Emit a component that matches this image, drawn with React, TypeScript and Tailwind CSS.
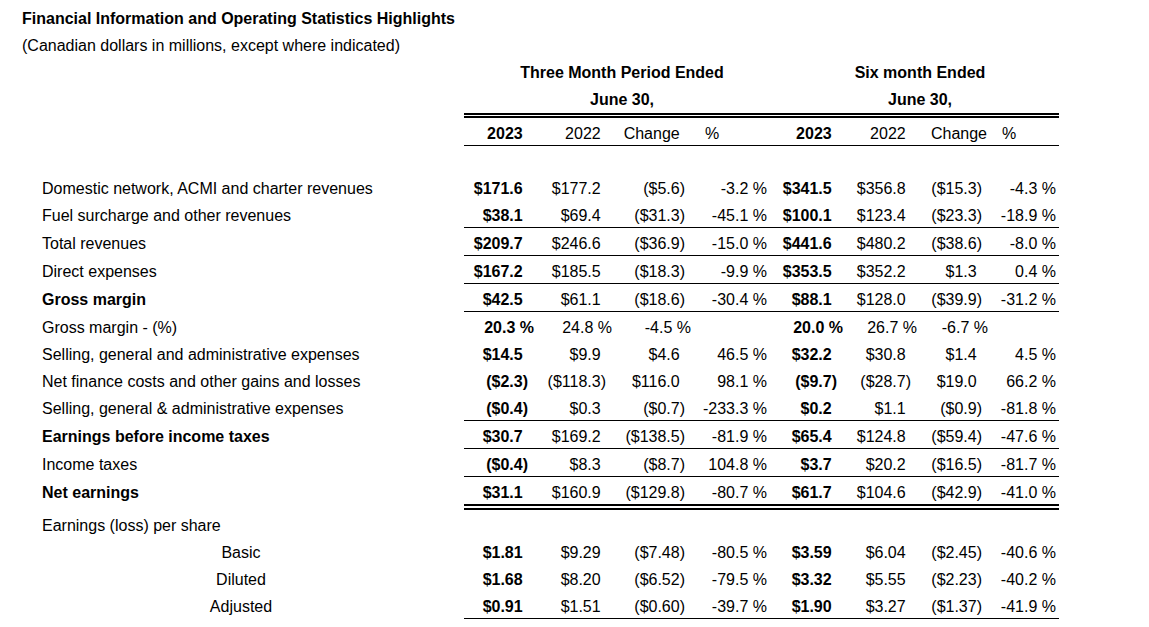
import React from "react";

const cols = [
  "w-[64px]",
  "w-[78px]",
  "w-[79px]",
  "w-[82px]",
  "w-[70px]",
  "w-[74px]",
  "w-[71px]",
  "w-[74px]",
];

type Row = {
  label: string;
  values?: string[];
  bold?: boolean;
  rule?: "single" | "double";
  center?: boolean;
  pct?: boolean;
};

const rows: Row[] = [
  {
    label: "Domestic network, ACMI and charter revenues",
    values: ["$171.6", "$177.2", "($5.6)", "-3.2 %", "$341.5", "$356.8", "($15.3)", "-4.3 %"],
  },
  {
    label: "Fuel surcharge and other revenues",
    values: ["$38.1", "$69.4", "($31.3)", "-45.1 %", "$100.1", "$123.4", "($23.3)", "-18.9 %"],
    rule: "single",
  },
  {
    label: "Total revenues",
    values: ["$209.7", "$246.6", "($36.9)", "-15.0 %", "$441.6", "$480.2", "($38.6)", "-8.0 %"],
    rule: "single",
  },
  {
    label: "Direct expenses",
    values: ["$167.2", "$185.5", "($18.3)", "-9.9 %", "$353.5", "$352.2", "$1.3", "0.4 %"],
    rule: "single",
  },
  {
    label: "Gross margin",
    bold: true,
    values: ["$42.5", "$61.1", "($18.6)", "-30.4 %", "$88.1", "$128.0", "($39.9)", "-31.2 %"],
    rule: "single",
  },
  {
    label: "Gross margin - (%)",
    pct: true,
    values: ["20.3 %", "24.8 %", "-4.5 %", "", "20.0 %", "26.7 %", "-6.7 %", ""],
  },
  {
    label: "Selling, general and administrative expenses",
    values: ["$14.5", "$9.9", "$4.6", "46.5 %", "$32.2", "$30.8", "$1.4", "4.5 %"],
  },
  {
    label: "Net finance costs and other gains and losses",
    values: ["($2.3)", "($118.3)", "$116.0", "98.1 %", "($9.7)", "($28.7)", "$19.0", "66.2 %"],
  },
  {
    label: "Selling, general & administrative expenses",
    values: ["($0.4)", "$0.3", "($0.7)", "-233.3 %", "$0.2", "$1.1", "($0.9)", "-81.8 %"],
    rule: "single",
  },
  {
    label: "Earnings before income taxes",
    bold: true,
    values: ["$30.7", "$169.2", "($138.5)", "-81.9 %", "$65.4", "$124.8", "($59.4)", "-47.6 %"],
    rule: "single",
  },
  {
    label: "Income taxes",
    values: ["($0.4)", "$8.3", "($8.7)", "104.8 %", "$3.7", "$20.2", "($16.5)", "-81.7 %"],
    rule: "single",
  },
  {
    label: "Net earnings",
    bold: true,
    values: ["$31.1", "$160.9", "($129.8)", "-80.7 %", "$61.7", "$104.6", "($42.9)", "-41.0 %"],
    rule: "double",
  },
  { label: "Earnings (loss) per share" },
  {
    label: "Basic",
    center: true,
    values: ["$1.81", "$9.29", "($7.48)", "-80.5 %", "$3.59", "$6.04", "($2.45)", "-40.6 %"],
  },
  {
    label: "Diluted",
    center: true,
    values: ["$1.68", "$8.20", "($6.52)", "-79.5 %", "$3.32", "$5.55", "($2.23)", "-40.2 %"],
  },
  {
    label: "Adjusted",
    center: true,
    values: ["$0.91", "$1.51", "($0.60)", "-39.7 %", "$1.90", "$3.27", "($1.37)", "-41.9 %"],
    rule: "single",
  },
];

function Cell({ v, i, pct }: { v: string; i: number; pct?: boolean }) {
  const bold = i === 0 || i === 4 ? "font-bold" : "";
  const pctCol = i === 3 || i === 7;
  if (pct) {
    return (
      <div className={`${cols[i]} ${bold} flex justify-end`}>
        <span className="-mr-[6px]">{v}</span>
      </div>
    );
  }
  return (
    <div className={`${cols[i]} ${bold} text-right`}>
      {v}
      {!pctCol && v && !v.endsWith(")") && <span className="invisible">)</span>}
    </div>
  );
}

function DataRow({ row }: { row: Row }) {
  return (
    <>
      <div className="flex">
        <div
          className={`w-[438px] pt-[7px] pb-[2px] ${row.center ? "text-center" : "pl-[20px]"} ${
            row.bold ? "font-bold" : ""
          }`}
        >
          {row.label}
        </div>
        <div
          className={`ml-[4px] flex w-[595px] pt-[7px] pb-[2px] ${
            row.rule === "single" ? "border-b border-black" : ""
          }`}
        >
          {row.values?.map((v, i) => <Cell key={i} v={v} i={i} pct={row.pct} />)}
        </div>
      </div>
      {row.rule === "double" && (
        <div className="ml-[442px] h-[6px] w-[595px] border-y-2 border-black" />
      )}
    </>
  );
}

export default function App() {
  return (
    <div className="min-h-screen bg-white pt-[3px] pl-[22px] font-['Liberation_Sans',Arial,sans-serif] text-[16px] leading-[18px] whitespace-nowrap text-black">
      <div className="pt-[7px] pb-[2px] font-bold">
        Financial Information and Operating Statistics Highlights
      </div>
      <div className="pt-[7px] pb-[2px]">
        (Canadian dollars in millions, except where indicated)
      </div>

      {/* Period headers */}
      <div className="ml-[442px] w-[595px]">
        <div className="flex font-bold">
          <div className="w-[303px] pl-[13px] text-center">
            <div className="pt-[7px] pb-[2px]">Three Month Period Ended</div>
            <div className="pt-[7px] pb-[2px]">June 30,</div>
          </div>
          <div className="w-[292px] pl-[14px] text-center">
            <div className="pt-[7px] pb-[2px]">Six month Ended</div>
            <div className="pt-[7px] pb-[2px]">June 30,</div>
          </div>
        </div>
        <div className="mt-[2px] h-[5px] border-y-2 border-black" />
        <div className="flex border-b border-black pt-[7px] pb-[2px]">
          <Cell v="2023" i={0} />
          <Cell v="2022" i={1} />
          <Cell v="Change" i={2} />
          <div className={`${cols[3]} pl-[20px]`}>%</div>
          <Cell v="2023" i={4} />
          <Cell v="2022" i={5} />
          <div className={`${cols[6]} flex justify-end`}>
            <span className="-mr-[5px]">Change</span>
          </div>
          <div className={`${cols[7]} pl-[20px]`}>%</div>
        </div>
      </div>

      <div className="h-[27px]" />

      {rows.map((r) => (
        <DataRow key={r.label} row={r} />
      ))}
    </div>
  );
}
